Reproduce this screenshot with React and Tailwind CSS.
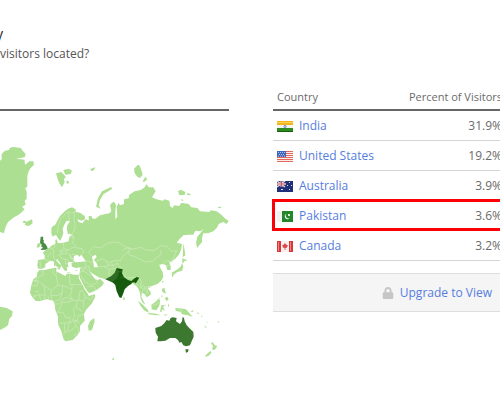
import { FaLock } from 'react-icons/fa';

const countries = [
  { name: 'India', percent: '31.9%', Flag: IndiaFlag },
  { name: 'United States', percent: '19.2%', Flag: UsFlag },
  { name: 'Australia', percent: '3.9%', Flag: AustraliaFlag },
  { name: 'Pakistan', percent: '3.6%', Flag: PakistanFlag, highlighted: true },
  { name: 'Canada', percent: '3.2%', Flag: CanadaFlag },
];

function FlagFrame({ children }) {
  return (
    <svg viewBox="0 0 16 11" className="w-4 h-[11px] shrink-0" aria-hidden="true">
      {children}
    </svg>
  );
}

function IndiaFlag() {
  return (
    <FlagFrame>
      <rect width="16" height="11" fill="#f4f4ee" />
      <rect width="16" height="4" fill="#f3b51c" />
      <rect y="1" width="16" height="1" fill="#fbd35c" />
      <rect y="7" width="16" height="4" fill="#2f8a22" />
      <rect y="10" width="16" height="1" fill="#12600c" />
      <circle cx="8" cy="5.5" r="1.2" fill="#c5cfe6" stroke="#7088bd" strokeWidth=".8" />
    </FlagFrame>
  );
}

function UsFlag() {
  return (
    <FlagFrame>
      <rect width="16" height="11" fill="#fbeeee" />
      <path d="M0 .5h16M0 2.5h16M0 4.5h16M0 6.5h16M0 8.5h16M0 10.5h16" stroke="#e2685c" />
      <rect width="9" height="6" fill="#3f66bd" />
      <path d="M1 1.5h7M2 3.5h6M1 5.2h7" stroke="#cfdaf2" strokeWidth=".8" strokeDasharray="1 1" />
    </FlagFrame>
  );
}

function AustraliaFlag() {
  return (
    <FlagFrame>
      <rect width="16" height="11" fill="#1f2f78" />
      <path d="M0 0l8 6M8 0L0 6" stroke="#d8d5e4" strokeWidth="1.4" />
      <path d="M4.5 0v6M0 3h9" stroke="#e9e2e8" strokeWidth="2" />
      <path d="M4.5 0v6M0 3h9" stroke="#d2565c" />
      <path d="M4 8h2v1H4zM12 1h1v1h-1zM10 4h1v1h-1zM14 4h1v1h-1zM12 8h1v1h-1z" fill="#e4e9fa" />
    </FlagFrame>
  );
}

function PakistanFlag() {
  return (
    <FlagFrame>
      <rect width="16" height="11" fill="#23862a" />
      <rect width="5" height="11" fill="#f1f2ef" />
      <path d="M9.5 2.8a2.8 2.8 0 1 0 3.6 3.7a2.3 2.3 0 1 1-3.6-3.7z" fill="#fff" />
      <path d="M11 3h2v2h-2z" fill="#d5ecd5" />
    </FlagFrame>
  );
}

function CanadaFlag() {
  return (
    <FlagFrame>
      <rect width="16" height="11" fill="#fbeeee" />
      <path d="M0 0h4v11H0zM12 0h4v11h-4z" fill="#d9363a" />
      <path d="M1 1h1v9H1zM13 1h1v9h-1z" fill="#ee8582" />
      <path d="M8 2l1 1.500 1.800.800-.800 2.200-1.600.600V9h-.800V7.100L6 6.500l-.800-2.200L7 3.500z" fill="#dc4247" />
    </FlagFrame>
  );
}

function WorldMap() {
  return (
    <svg viewBox="0 0 687 705" className="block w-full" role="img" aria-label="Visitors by country">
      <g fill="#acdf91">
        {/* Greenland, Iceland, Arctic islands */}
        <path d="M0 92L5 88 5 72 15 62 27 60 30 53 40 51 62 54 68 62 77 72 74 82 60 84 48 86 74 89 74 98 76 104 88 94 100 94 102 104 92 114 86 124 82 138 82 170 76 174 80 186 80 206 74 212 77 224 66 230 74 238 66 246 56 254 42 262 24 276 18 288 14 300 12 310 0 306z" />
        <path d="M70 272l6 0 2 4 8-4 10-4 2 12-12 8-12-3 2-6-7 0z" />
        <path d="M168 130l16-4 8 8 6 8-6 4 2 10-8 16-8-12-6-16zM190 120l16-4 10 6-4 10-16 2zM199 152l8 2-2 8-5-2zM270 118l8-4 8-2-4 8-6 4z" />
        <path d="M334 171l2 6-26 16-10 17-4 16 6 10-14-6 6-26 12-20 16-8z" />
        <path d="M414 104l4 2 6 14 4 14-8 10-8-4-8-10-2-14zM436 140l6 8-10 8-4-2zM534 182l10-2 12 6-2 8-16 2zM560 190l12 2-2 4-8-1zM542 208l10 2-6 3zM654 231l8-1 2 4-9 1z" />
        {/* Europe and Asia */}
        <path
          fillRule="evenodd"
          d="M154 296L156 290 166 284 172 272 180 258 192 246 204 236 216 232 226 238 228 246 240 248 254 258 256 268 244 272 232 268 236 276 248 280 252 272 260 268 266 272 266 258 274 258 278 266 286 266 300 256 316 252 328 250 334 244 330 226 336 218 342 215 348 225 346 245 346 268 352 260 350 230 356 218 360 226 372 222 372 208 386 205 388 194 404 184 422 180 434 172 440 162 446 172 460 172 467 184 456 202 470 208 488 212 494 208 508 212 510 228 518 234 522 226 538 228 544 218 566 222 574 232 592 234 600 244 628 246 632 241 650 244 664 254 676 266 686 272 680 282 670 276 656 282 652 292 640 304 624 310 610 310 606 324 606 336 596 348 592 354 588 340 592 320 604 306 610 296 602 304 586 302 580 314 566 314 550 316 538 328 530 338 546 342 544 356 538 372 526 386 520 390 508 398 512 408 512 420 502 420 498 406 488 402 478 404 480 412 488 426 490 440 484 452 472 462 456 468 446 468 444 476 452 486 452 494 440 502 434 492 426 488 424 500 430 512 436 524 428 518 422 506 420 488 414 474 406 466 396 458 384 464 340 458 316 448 296 442 286 436 276 430 268 422 276 436 286 448 294 450 300 446 312 458 306 468 290 480 268 490 262 484 252 468 240 444 238 434 240 420 242 412 228 414 216 410 214 400 222 396 206 396 203 402 206 410 200 412 202 422 194 422 186 410 180 398 172 388 168 390 178 402 184 406 180 416 168 408 160 394 150 392 142 398 136 402 136 412 126 416 114 416 112 406 114 390 130 388 134 388 134 376 128 368 138 360 150 352 156 346 166 342 166 330 170 328 174 340 190 338 206 334 208 320 218 314 204 312 200 296 202 286 210 274 200 272 192 286 188 298 190 310 186 322 180 332 172 322 168 314 158 320 154 310zM220 392L222 378 232 374 238 380 244 374 252 386 258 394 240 396 226 397zM276 380L286 374 290 380 282 390 290 400 294 412 282 412 280 398z"
        />
        {/* Africa, Madagascar, tip of South America */}
        <path d="M118 420L130 421 150 416 166 413 170 415 168 424 180 430 196 438 200 431 210 431 222 434 237 434 236 444 246 462 254 478 264 492 266 498 284 493 286 500 276 520 258 540 252 552 254 572 240 588 240 604 232 616 218 630 196 634 190 626 184 604 174 582 174 560 166 540 164 522 160 512 140 508 118 514 106 512 96 500 90 488 94 466 100 448 110 440 112 428zM282 564l2 10-8 26-10 2-2-14 6-14zM0 530l20 4 18 10-2 14-8 8-4 20-12 8-12 6z" />
        {/* Ireland, Mediterranean islands */}
        <path d="M118 338l4 6-4 8-8 1 2-10zM162 398l4 0 0 10-4 0zM170 414l10-1-1 6zM202 427l10 1-1 2-9-1zM226 421l8-2-4 4z" />
        {/* Sakhalin, Japan, Taiwan */}
        <path d="M550 340l3 14 3 22-8 6 1-20zM548 384l14 8-10 2-2 6-4-4zM546 398l4 12-4 12-14 4-11 8-6-6 18-10 10-9zM517 430l4 6-4 6-2-6zM486 454l5-2-3 8zM445 470l7-2-3 7zM370 500l5 4-1 7-4-2z" />
        {/* South-east Asia and Pacific */}
        <path d="M486 476l8-2 1 10 5 6-8-1-6-5zM494 504l8-4 4 8-6 6zM484 496l4 2-4 6zM480 500l-4 9-2-1zM454 524l12-8 10-10 5 5-3 16-9 14-14-3zM414 512l16 14 14 14 2 8-14-7-12-16zM444 549l24 2 14 5-14 0-22-3zM484 526l14-2-9 6 6 13-8-5-3 8-4-1zM490 555l14-3-8 5zM504 520l4 8-4 2zM526 534l14 1 18 3 10 11 10 12-14-5-18-3-5-8-14-2zM572 544l10-3-5 6zM590 546l8 5-4 2zM602 556l6 4-3 2zM612 586l8 6-3 2zM652 576l6-4-2 6zM620 572l3 5-2 1z" />
        <path d="M638 636l6 10 8 2-8 12-8-2 3-10-6-8zM632 662l2 6-6 8-8 4-5-2 9-9zM336 686l6-2 0 5-4 1z" />
      </g>

      <g fill="none" stroke="#d0ecbf" strokeWidth="2" strokeLinejoin="round">
        {/* Europe */}
        <path d="M172 310l2-20 8-22 14-16 10-8 8 6 12-6M206 246l2 26M224 246l-2 20 4 26-8 18M208 322h14l-4 16 12 14M218 314l2 12M190 338l2 18-12 8 6 8-10 4M150 352l12 10-2 14 4 14M166 344l-6 12M192 356l16 4 10-8 28 4 6 10-8 8M180 364h14l10-4M186 372l16-2 8 4 2 12 10 0M176 376l12 10 14 2 4 8M114 396l8 2-2 16M134 388l12 4M196 388l0 14 10-4M216 372l10 2M200 310h12" />
        {/* Middle East and Central Asia */}
        <path d="M256 392l16 4 10 2M256 398l2 14-16 2M244 420l14-4 8 8M258 412l8-4 4 16M240 426l12-2 20 14M242 436l14 20 18 10 16-8 2-8M262 470l16-2 10 12M294 410l18 0 16 8-2 16 6 10-4 8M276 378l-10-12 14-16 22 4 20-14 18-4 18 2 18 12 20 6M290 394l18-8 18 12 16-6 20 0 6-12 22-20M312 410l16-4 12 0 14-6M318 392l8 16M328 418l22-4M350 400l14 14" />
        {/* East Asia */}
        <path d="M368 360l12-6 16 4 16-4 12-2 12 8 26 2 22-16 18 4 12 14 16-2-10 22-4 12-12-2M386 362l2 12 26 10 20 12 24-2 12-12 14-8-2-14M366 432l16 12 26-2 10 2 6 12-4 12 8 10 14-8 14 0M396 450l4 10M406 448l6 20M420 474l10-8 8 8 6 14-6 4M424 488l10-10 10 10M488 400l12-8 10 2M498 408l10-1" />
        {/* Africa */}
        <path d="M128 420l2 14-22 12-2 10M98 452h14v14l-18 2M112 452l20 14 4 30-18-2-12 2-4 10M132 466l22 16 20-16-6-32 2-10M160 418l-2 12 10 6M174 466l14 0 28 12M208 432l2 32h38M216 464v16l-6 16 8 14M154 482l-2 14h22l12-6 2-24M136 496l-4 14M144 496l2 14M154 496v14M118 494l4 18M106 496l-8 4M104 484l14 2M186 490l-6 18-14 6M186 508l14-6 10 4 16 6 10-2 4-26 10-2M164 522h12l10-8 2-6M236 510l14 4 6-12-6-14M250 514v20M256 502l16 8 8-12M232 512l-4 18 20 16M218 512l-16 4-16 2-8 24-8 4M170 548l20 0 6 14h14l0 16-34 2M226 530l-6 10 4 18-6 12 14 2 2-16 18-2M210 578l14-6 14 6M194 580v28l-6 4M206 580l-2 16-8 14M204 606l14-8 10-10-4-12M228 588l8 10-2 12M222 618l6-6 4 4" />
        <path d="M154 368l-12 14M210 374l8 14M530 536l14 2v12M458 526l14-4 6-8M340 410l-6-12" />
      </g>

      <path d="M122 320l8 0-1 8 3 4-2 4 8 8 4 8 1 4-6 3-15 1 2-4 6-3-6-2 1-7-5-5z" fill="#4c8b43" />
      <path d="M316 448L334 438 344 428 350 414 360 420 354 436 348 448 342 460 330 454z" fill="#2f6b25" />
      <path d="M350 414L360 416 368 418 366 430 372 442 384 450 394 453 402 446 410 441 418 443 412 452 408 460 402 457 396 458 394 462 384 468 374 478 370 490 364 504 358 502 350 484 346 466 338 456 348 446 354 434 356 424z" fill="#165a0e" />
      <path d="M354 424l6 2 6-2M372 442l-6-2-6 4" fill="none" stroke="#5a8d50" />
      <path d="M466 594L484 588 494 578 500 570 508 572 512 564 518 562 530 564 528 574 540 582 546 574 548 560 552 564 554 574 560 586 570 596 580 606 581 620 574 636 570 646 558 649 550 646 544 636 538 638 534 630 526 624 510 624 496 632 482 634 472 634 474 620 467 608zM556 658h10l-2 8-6 2z" fill="#3c7830" />
    </svg>
  );
}

function CountryTable() {
  return (
    <table className="w-full border-collapse text-[#6b6b6b]">
      <thead>
        <tr className="border-b-2 border-[#666]">
          <th scope="col" className="h-7 px-1 pt-1 text-left text-[11px] font-normal">Country</th>
          <th scope="col" className="h-7 pt-1 pr-[3px] text-right text-[11px] font-normal whitespace-nowrap">Percent of Visitors</th>
        </tr>
      </thead>
      <tbody>
        {countries.map(({ name, percent, Flag, highlighted }) => (
          <tr
            key={name}
            className={
              highlighted
                ? 'border-b border-[#d5d5d5] outline-3 -outline-offset-2 outline-[#fb0007]'
                : 'border-b border-[#d5d5d5]'
            }
          >
            <td className="h-[30px] px-1 pt-0.5 pb-0">
              <div className="flex items-center gap-1.5">
                <Flag />
                <a href="#" className="text-[12px] leading-5 text-[#557de0] whitespace-nowrap">{name}</a>
              </div>
            </td>
            <td className="h-[30px] pt-0.5 pr-[3px] pb-0 text-right text-[12px] leading-5">{percent}</td>
          </tr>
        ))}
      </tbody>
    </table>
  );
}

export default function App() {
  return (
    <main className="flex gap-11 overflow-hidden bg-white font-['Open_Sans','Noto_Sans',sans-serif]">
      <section className="min-w-0 flex-1 pt-6">
        <header className="h-[87px] border-b-2 border-[#666]">
          <h1 className="-ml-1 text-[14px] leading-5 text-[#222]">y</h1>
          <p className="text-[12px] leading-5 text-[#555]">visitors located?</p>
        </header>
        <div className="pt-[19px]">
          <WorldMap />
        </div>
      </section>

      <aside className="-mr-[5px] w-[232px] shrink-0 pt-[82px]">
        <CountryTable />
        <button
          type="button"
          className="mt-3 flex h-[39px] w-full items-center justify-end gap-1.5 border-y border-[#dedede] bg-[#f5f5f5] pt-0.5 pr-[13px] text-[12px] text-[#557de0]"
        >
          <FaLock className="size-3 text-[#c6c6c6]" />
          Upgrade to View
        </button>
      </aside>
    </main>
  );
}
